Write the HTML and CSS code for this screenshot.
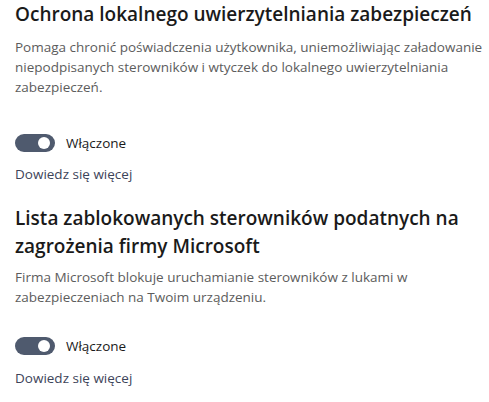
FILE: index.html
```html
<!DOCTYPE html>
<html lang="pl">
<head>
<meta charset="utf-8">
<link rel="stylesheet" href="styles.css">
</head>
<body>
<main class="page">
  <section class="setting">
    <h2 class="title">Ochrona lokalnego uwierzytelniania zabezpieczeń</h2>
    <p class="desc">Pomaga chronić poświadczenia użytkownika, uniemożliwiając załadowanie<br>niepodpisanych sterowników i wtyczek do lokalnego uwierzytelniania<br>zabezpieczeń.</p>
    <div class="toggle-row">
      <span class="toggle"><span class="knob"></span></span>
      <span class="state">Włączone</span>
    </div>
    <a class="link" href="#">Dowiedz się więcej</a>
  </section>
  <section class="setting second">
    <h2 class="title">Lista zablokowanych sterowników podatnych na<br>zagrożenia firmy Microsoft</h2>
    <p class="desc desc2">Firma Microsoft blokuje uruchamianie sterowników z lukami w<br>zabezpieczeniach na Twoim urządzeniu.</p>
    <div class="toggle-row toggle-row2">
      <span class="toggle"><span class="knob"></span></span>
      <span class="state">Włączone</span>
    </div>
    <a class="link link2" href="#">Dowiedz się więcej</a>
  </section>
</main>
</body>
</html>
```
FILE: styles.css
```css
html, body {
  margin: 0;
  padding: 0;
  background: #ffffff;
}
.page {
  padding-left: 15px;
  font-family: "Open Sans", "Noto Sans", sans-serif;
  overflow: hidden;
}
.setting {
  display: flex;
  flex-direction: column;
  align-items: flex-start;
}
.second {
  margin-top: 20px;
}
.title {
  margin: 0;
  font-size: 19px;
  font-weight: 600;
  line-height: 28px;
  color: #1a1a1a;
  white-space: nowrap;
}
.desc {
  margin: 9px 0 0;
  font-size: 13.5px;
  line-height: 20px;
  color: #5c5c5c;
  white-space: nowrap;
}
.desc2 {
  margin-top: 7px;
}
.toggle-row {
  display: flex;
  align-items: center;
  gap: 11px;
  margin-top: 36px;
  height: 20px;
}
.toggle-row2 {
  margin-top: 29px;
}
.toggle {
  display: flex;
  align-items: center;
  justify-content: flex-end;
  box-sizing: border-box;
  width: 40px;
  height: 18px;
  border-radius: 9px;
  background: #4f5a6e;
  padding-right: 5px;
}
.knob {
  width: 12px;
  height: 12px;
  border-radius: 50%;
  background: #ffffff;
}
.state {
  font-size: 13.5px;
  line-height: 20px;
  color: #1a1a1a;
}
.link {
  margin-top: 11px;
  font-size: 13.5px;
  line-height: 20px;
  color: #3d4459;
  text-decoration: none;
}
.link2 {
  margin-top: 12px;
}
```
